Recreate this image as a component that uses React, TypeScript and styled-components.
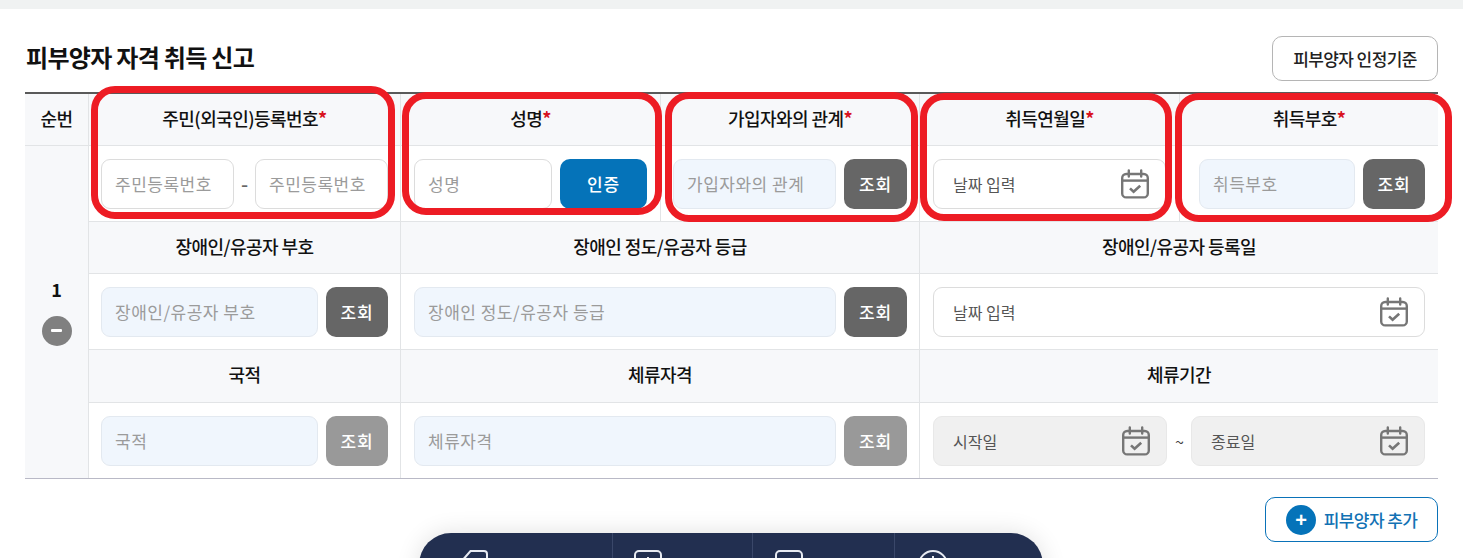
import React from "react";
import styled, { createGlobalStyle } from "styled-components";

const Global = createGlobalStyle`
  html, body { margin: 0; padding: 0; background: #fff; overflow: hidden; }
  body { font-family: "Noto Sans CJK KR", "Noto Sans", sans-serif; color: #111; }
  * { box-sizing: border-box; }
`;

const Band = styled.div`height: 9px; background: #f0f2f2;`;
const Page = styled.main`position: relative; height: 549px; padding: 0 25px;`;
const Head = styled.header`
  display: flex; justify-content: space-between; align-items: center;
  padding-top: 27px; margin-bottom: 11px; height: 72px;
`;
const Title = styled.h2`
  margin: 0; font-size: 24px; font-weight: 700; letter-spacing: -0.7px; color: #111; line-height: 46px;
  padding: 0 0 4px 1px;
`;
const CriteriaButton = styled.button`
  width: 166px; height: 45px; border: 1px solid #b5b5b5; border-radius: 10px; background: #fff;
  font: 500 17px "Noto Sans CJK KR", sans-serif; letter-spacing: -0.6px; color: #222;
`;
const Table = styled.section`
  display: grid;
  grid-template-columns: 64px 312px 260px 259px 260px 258px;
  grid-template-rows: 52px 76px 52px 76px 53px 75px;
  border-top: 2px solid #5a5a5a;
  border-bottom: 1px solid #b9b9c6;
  & > :nth-last-child(-n+3) { border-bottom: 0; }
`;
const Cell = styled.div<{ $span?: number }>`
  grid-column: span ${p => p.$span ?? 1};
  border-right: 1px solid #e2e4e6;
  border-bottom: 1px solid #e2e4e6;
  &:last-child { border-right: 0; }
`;
const Th = styled(Cell)<{ $end?: boolean }>`
  display: flex; align-items: center; justify-content: center;
  background: #f7f8fa; font-size: 18px; font-weight: 500; letter-spacing: -0.55px; color: #111;
  padding-bottom: 4px;
  ${p => p.$end ? "border-right: 0;" : ""}
`;
const Star = styled.span`color: #d8121e; font-weight: 700;`;
const Seq = styled.div`
  grid-column: 1; grid-row: 2 / span 5;
  display: flex; flex-direction: column; align-items: center; justify-content: center; gap: 14px;
  padding-bottom: 3px;
  background: #f7f8fa; border-right: 1px solid #e2e4e6;
  font-size: 18px; font-weight: 700;
`;
const MinusButton = styled.button`
  width: 30px; height: 30px; border: 0; border-radius: 50%; background: #808080; padding: 0;
  display: flex; align-items: center; justify-content: center;
  &::before { content: ""; width: 11px; height: 3px; background: #fff; border-radius: 1px; }
`;
const Td = styled(Cell)<{ $left?: number; $right?: number; $end?: boolean }>`
  display: flex; align-items: center; gap: 8px;
  padding: 0 ${p => p.$right ?? 12}px 0 ${p => p.$left ?? 12}px;
  ${p => p.$end ? "border-right: 0;" : ""}
`;
const Field = styled.input<{ $tint?: boolean }>`
  flex: 1 1 0; min-width: 0; height: 50px; padding: 0 13px;
  border: 1px solid ${p => p.$tint ? "#e3e9f0" : "#dcdcdc"}; border-radius: 9px;
  background: ${p => p.$tint ? "#f0f6fd" : "#fff"};
  font: 400 17px "Noto Sans CJK KR", sans-serif; letter-spacing: 0.5px; outline: none;
  &::placeholder { color: #9b9b9b; opacity: 1; }
`;
const Dash = styled.span`width: 5px; flex: none; display: flex; justify-content: center; color: #666; font-size: 20px; font-weight: 500;`;
const Look = styled.button<{ $tone?: "dark" | "off" | "blue"; $w?: number }>`
  flex: none; width: ${p => p.$w ?? 62}px; height: 50px; border: 0; border-radius: 10px;
  background: ${p => p.$tone === "off" ? "#999" : p.$tone === "blue" ? "#0573b9" : "#666"};
  color: #fff; font: 500 17px "Noto Sans CJK KR", sans-serif; letter-spacing: 0.8px; padding: 0 0 1px;
`;
const DateBox = styled.div<{ $off?: boolean }>`
  flex: 1 1 0; min-width: 0; height: 50px; padding: 0 15px 0 19px;
  display: flex; align-items: center; justify-content: space-between;
  border: 1px solid ${p => p.$off ? "#e8e8e8" : "#dcdcdc"}; border-radius: 9px;
  background: ${p => p.$off ? "#f0f0f0" : "#fff"};
  font-size: 16px; letter-spacing: 0; color: #555;
`;
const Tilde = styled.span`flex: none; width: 8px; text-align: center; font-size: 16px; color: #444;`;
const Foot = styled.footer`display: flex; justify-content: flex-end; margin-top: 18px;`;
const AddButton = styled.button`
  width: 173px; height: 45px; border: 1px solid #0a72b8; border-radius: 10px; background: #fff;
  display: flex; align-items: center; justify-content: center; gap: 8px; padding: 0;
  font: 500 17px "Noto Sans CJK KR", sans-serif; letter-spacing: -0.6px; color: #1272b4;
`;
const PlusDot = styled.span`
  width: 30px; height: 30px; border-radius: 50%; background: #0573b9;
  display: flex; align-items: center; justify-content: center;
  color: #fff; font: 700 20px/1 "Liberation Sans", sans-serif;
`;
const Ring = styled.div<{ $l: number; $t: number; $w: number; $h: number }>`
  position: absolute; pointer-events: none;
  left: ${p => p.$l}px; top: ${p => p.$t}px; width: ${p => p.$w}px; height: ${p => p.$h}px;
  border: 7px solid #ed1c24; border-radius: 24px;
`;
const Dock = styled.nav`
  position: fixed; left: 419px; top: 533px; width: 624px; height: 70px;
  display: grid; grid-template-columns: 194px 140px 142px 148px;
  background: #222f50; border-radius: 32px 32px 0 0;
  box-shadow: 0 0 24px rgba(0,0,0,.12);
`;
const DockItem = styled.div<{ $pad: number }>`
  padding: 17px 0 0 ${p => p.$pad}px;
  &:not(:last-child) { border-right: 1px solid #3a4769; }
  svg { display: block; }
`;

const CalendarIcon = () => (
  <svg width="30" height="30" viewBox="0 0 30 30" fill="none" stroke="#767676" strokeWidth="2.4">
    <rect x="2.2" y="5" width="25.6" height="23.4" rx="4" />
    <path d="M2.2 11.6H27.8" />
    <path d="M8.8 1.4V7.6M21.2 1.4V7.6" strokeLinecap="round" />
    <path d="M10 19.4l3.6 3.4 6.6-6" strokeWidth="2.6" />
  </svg>
);

const Input = ({ text, tint }: { text: string; tint?: boolean }) => <Field placeholder={text} $tint={tint} readOnly />;

const DateField = ({ text, off }: { text: string; off?: boolean }) => (
  <DateBox $off={off}><span>{text}</span><CalendarIcon /></DateBox>
);

export default function App() {
  return (
    <>
      <Global />
      <Band />
      <Page>
        <Head>
          <Title>피부양자 자격 취득 신고</Title>
          <CriteriaButton>피부양자 인정기준</CriteriaButton>
        </Head>
        <Table>
          <Th>순번</Th>
          <Th>주민(외국인)등록번호<Star>*</Star></Th>
          <Th>성명<Star>*</Star></Th>
          <Th>가입자와의 관계<Star>*</Star></Th>
          <Th>취득연월일<Star>*</Star></Th>
          <Th $end>취득부호<Star>*</Star></Th>

          <Seq>1<MinusButton aria-label="삭제" /></Seq>
          <Td><Input text="주민등록번호" /><Dash>-</Dash><Input text="주민등록번호" /></Td>
          <Td $left={13} $right={13}><Input text="성명" /><Look $tone="blue" $w={87}>인증</Look></Td>
          <Td><Input text="가입자와의 관계" tint /><Look $w={63}>조회</Look></Td>
          <Td $left={13} $right={13}><DateField text="날짜 입력" /></Td>
          <Td $left={19} $right={13} $end><Input text="취득부호" tint /><Look>조회</Look></Td>

          <Th>장애인/유공자 부호</Th>
          <Th $span={2}>장애인 정도/유공자 등급</Th>
          <Th $span={2} $end>장애인/유공자 등록일</Th>

          <Td><Input text="장애인/유공자 부호" tint /><Look>조회</Look></Td>
          <Td $span={2} $left={13}><Input text="장애인 정도/유공자 등급" tint /><Look $w={63}>조회</Look></Td>
          <Td $span={2} $left={13} $right={13} $end><DateField text="날짜 입력" /></Td>

          <Th>국적</Th>
          <Th $span={2}>체류자격</Th>
          <Th $span={2} $end>체류기간</Th>

          <Td><Input text="국적" tint /><Look $tone="off">조회</Look></Td>
          <Td $span={2} $left={13}><Input text="체류자격" tint /><Look $tone="off" $w={63}>조회</Look></Td>
          <Td $span={2} $left={13} $right={13} $end>
            <DateField text="시작일" off /><Tilde>~</Tilde><DateField text="종료일" off />
          </Td>
        </Table>
        <Foot>
          <AddButton><PlusDot>+</PlusDot>피부양자 추가</AddButton>
        </Foot>
        <Ring $l={91} $t={77} $w={304} $h={133} />
        <Ring $l={402} $t={83} $w={260} $h={123} />
        <Ring $l={665} $t={83} $w={253} $h={130} />
        <Ring $l={920} $t={84} $w={252} $h={128} />
        <Ring $l={1175} $t={84} $w={277} $h={129} />
      </Page>
      <Dock>
        <DockItem $pad={41}>
          <svg width="28" height="20" viewBox="0 0 28 20" fill="none" stroke="#e8ebf2" strokeWidth="2">
            <path d="M1 12L10.5 1H24a3 3 0 0 1 3 3V20" />
          </svg>
        </DockItem>
        <DockItem $pad={21}>
          <svg width="28" height="20" viewBox="0 0 28 20" fill="none" stroke="#e8ebf2" strokeWidth="2">
            <path d="M1 20V5a4 4 0 0 1 4-4H23a4 4 0 0 1 4 4V20" />
            <path d="M14 7v2" />
          </svg>
        </DockItem>
        <DockItem $pad={22}>
          <svg width="28" height="20" viewBox="0 0 28 20" fill="none" stroke="#e8ebf2" strokeWidth="2">
            <path d="M1 20V5a4 4 0 0 1 4-4H23a4 4 0 0 1 4 4V20" />
          </svg>
        </DockItem>
        <DockItem $pad={23}>
          <svg width="30" height="20" viewBox="0 0 30 20" fill="none" stroke="#e8ebf2" strokeWidth="2">
            <circle cx="15" cy="15" r="14" />
            <path d="M15 6v2" />
          </svg>
        </DockItem>
      </Dock>
    </>
  );
}
